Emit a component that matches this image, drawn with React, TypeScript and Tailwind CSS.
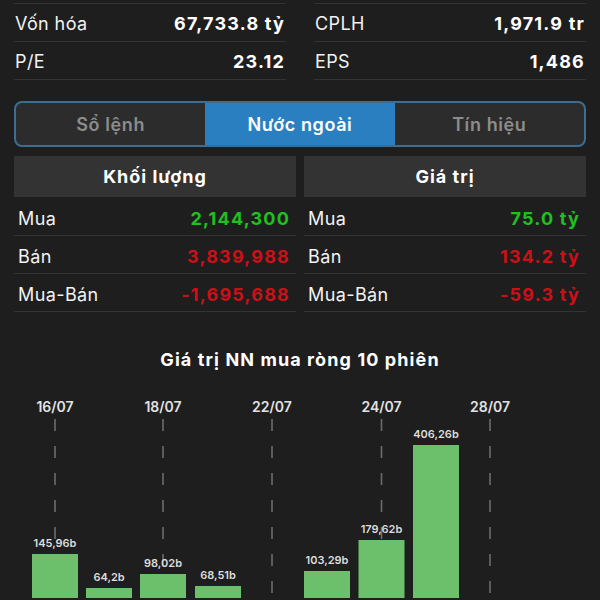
import React from 'react'

const font = { fontFamily: 'Inter, "Noto Sans", sans-serif' }

const stats = [
  [
    ['Vốn hóa', '67,733.8 tỷ'],
    ['P/E', '23.12'],
  ],
  [
    ['CPLH', '1,971.9 tr'],
    ['EPS', '1,486'],
  ],
]

const flows = [
  {
    title: 'Khối lượng',
    rows: [
      ['Mua', '2,144,300', 'text-[#20c020]'],
      ['Bán', '3,839,988', 'text-[#cc1018]'],
      ['Mua-Bán', '-1,695,688', 'text-[#cc1018]'],
    ],
  },
  {
    title: 'Giá trị',
    rows: [
      ['Mua', '75.0 tỷ', 'text-[#20c020]'],
      ['Bán', '134.2 tỷ', 'text-[#cc1018]'],
      ['Mua-Bán', '-59.3 tỷ', 'text-[#cc1018]'],
    ],
  },
]

// chart data: slot centre, bar top (page y), label
const bars = [
  { x: 55, top: 556, label: '145,96b' },
  { x: 109, top: 590, label: '64,2b' },
  { x: 163, top: 576, label: '98,02b' },
  { x: 218, top: 588, label: '68,51b' },
  { x: 327, top: 573, label: '103,29b' },
  { x: 381.5, top: 542, label: '179,62b' },
  { x: 436, top: 447, label: '406,26b' },
]

const ticks = [
  { x: 55, label: '16/07' },
  { x: 163, label: '18/07' },
  { x: 272, label: '22/07' },
  { x: 381.5, label: '24/07' },
  { x: 490, label: '28/07' },
]

const CHART_TOP = 384

const Chart = () => (
  <svg width="600" height="216" viewBox="0 0 600 216" className="block">
    {ticks.map((t) => (
      <g key={t.label}>
        <text
          x={t.x}
          y={408 - CHART_TOP + 6}
          textAnchor="middle"
          fontSize="14"
          fontWeight="600"
          fill="#e2e2e2"
          style={font}
        >
          {t.label}
        </text>
        <line
          x1={t.x}
          x2={t.x}
          y1={421 - CHART_TOP}
          y2={216}
          stroke="#6c6c6c"
          strokeWidth="1.6"
          strokeDasharray="12 15"
        />
      </g>
    ))}
    {bars.map((b) => (
      <g key={b.label}>
        <rect x={b.x - 23} y={b.top - CHART_TOP} width="46" height={216} fill="#6dc06b" />
        <text
          x={b.x}
          y={b.top - CHART_TOP - 7}
          textAnchor="middle"
          fontSize="11"
          fontWeight="600"
          fill="#dcdcdc"
          style={font}
        >
          {b.label}
        </text>
      </g>
    ))}
  </svg>
)

export default function App() {
  return (
    <div className="w-[600px] h-[600px] overflow-hidden bg-[#1e1e1e] text-white" style={font}>
      {/* top stats */}
      <div className="grid grid-cols-2 gap-[28px] px-[14px] pt-[3px]">
        {stats.map((col, i) => (
          <div key={i} className="border-t border-[#333]">
            {col.map(([k, v]) => (
              <div
                key={k}
                className="h-[38px] flex items-center justify-between px-[1px] pt-[2px] border-b border-[#333] text-[18px]"
              >
                <span className="text-[#f2f2f2] tracking-[0.4px]">{k}</span>
                <span className="font-bold tracking-[1.2px]">{v}</span>
              </div>
            ))}
          </div>
        ))}
      </div>

      {/* tabs */}
      <div className="mx-[14px] mt-[21px] h-[46px] flex rounded-[8px] border-2 border-[#3c6e93] overflow-hidden bg-[#2c2c2c] text-[18px] font-semibold tracking-[0.6px]">
        <div className="flex-1 flex items-center justify-center text-[#8c8c8c]">Sổ lệnh</div>
        <div className="flex-1 flex items-center justify-center bg-[#2a7fc1] text-white">Nước ngoài</div>
        <div className="flex-1 flex items-center justify-center text-[#8c8c8c]">Tín hiệu</div>
      </div>

      {/* foreign flows */}
      <div className="grid grid-cols-2 gap-[8px] px-[14px] mt-[9px]">
        {flows.map((f) => (
          <div key={f.title}>
            <div className="h-[41px] bg-[#333333] flex items-center justify-center text-[18px] font-bold tracking-[1px]">
              {f.title}
            </div>
            <div className="mt-[1px]">
              {f.rows.map(([k, v, c]) => (
                <div
                  key={k}
                  className="h-[38px] flex items-center justify-between pl-[4px] pr-[6px] pt-[3px] border-b border-[#333] text-[18px]"
                >
                  <span className="text-[#f2f2f2] tracking-[0.4px]">{k}</span>
                  <span className={`font-bold tracking-[1.2px] ${c}`}>{v}</span>
                </div>
              ))}
            </div>
          </div>
        ))}
      </div>

      {/* chart */}
      <div className="mt-[36px] text-center text-[18px] font-bold leading-[24px] tracking-[1.1px]">
        Giá trị NN mua ròng 10 phiên
      </div>
      <div className="mt-[10px]">
        <Chart />
      </div>
    </div>
  )
}
